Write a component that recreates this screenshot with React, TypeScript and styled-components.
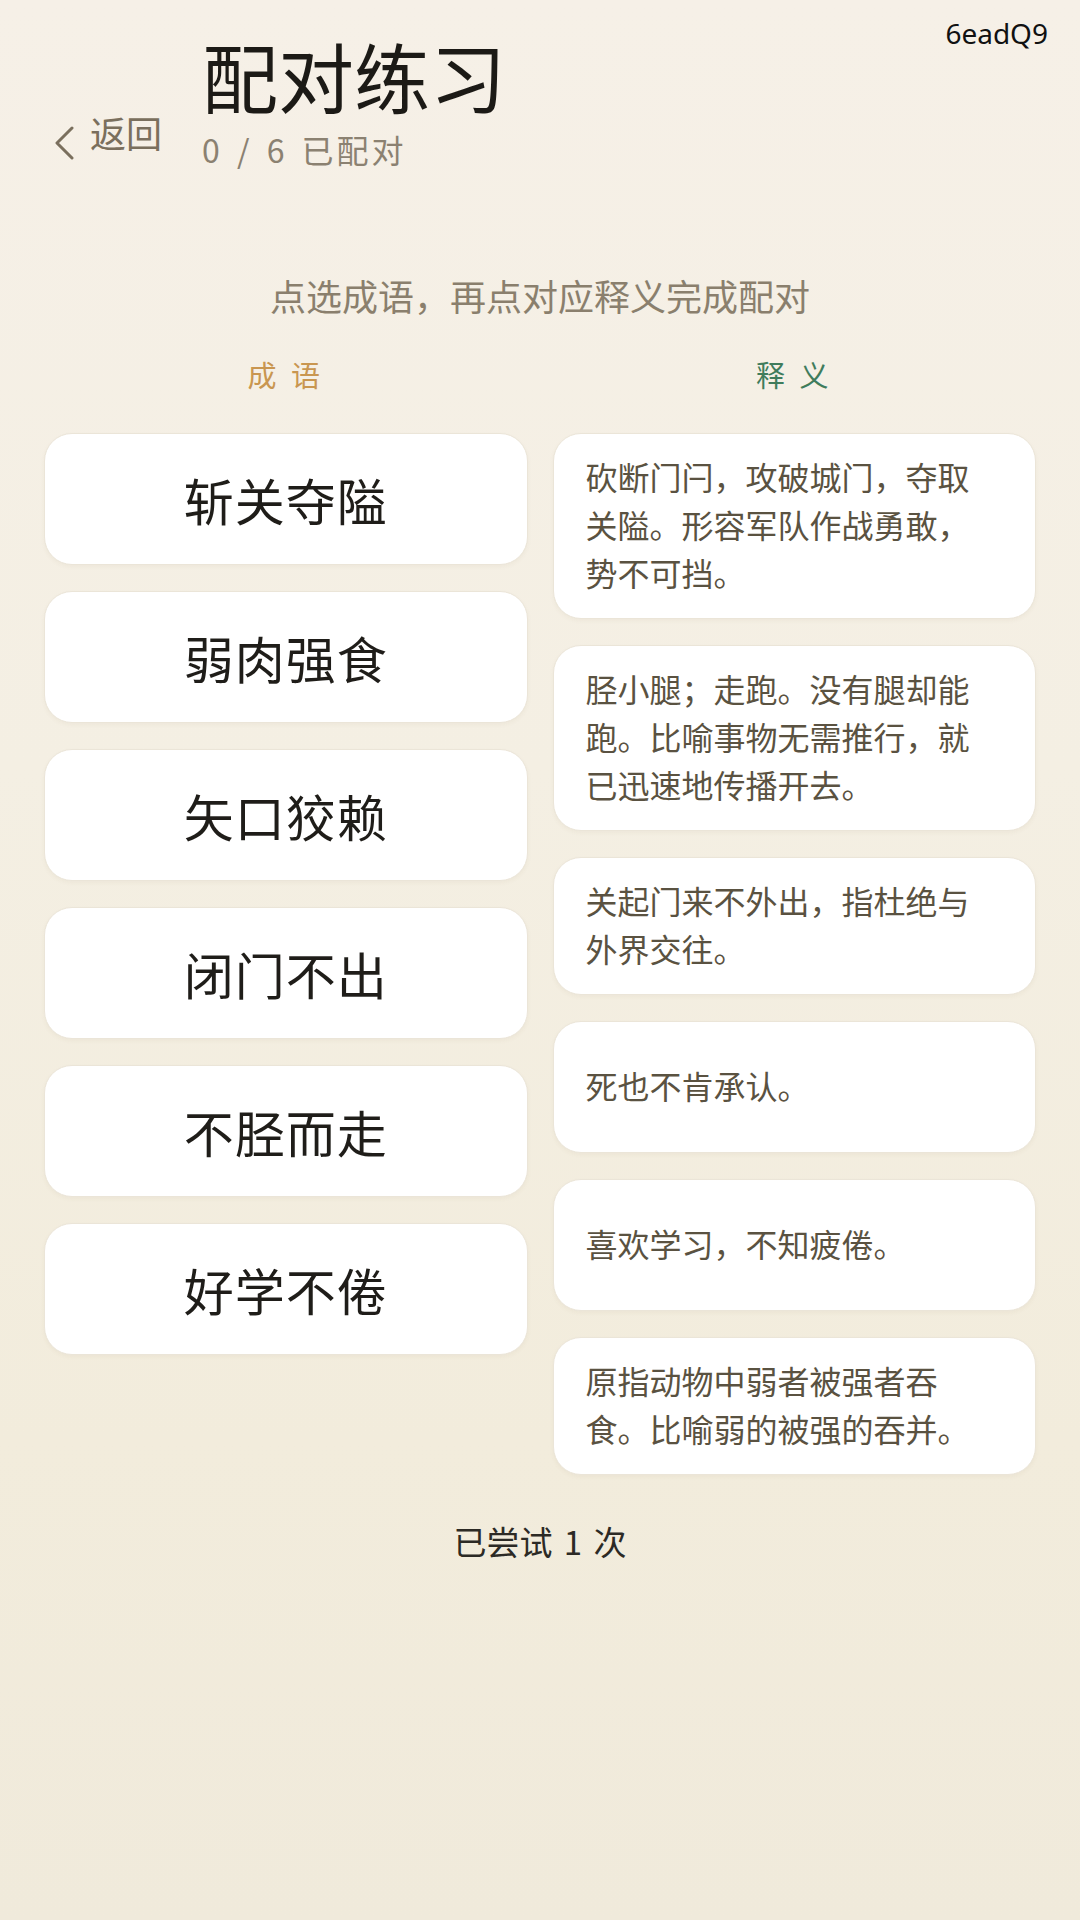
import styled, {createGlobalStyle} from 'styled-components';

const GlobalStyle = createGlobalStyle`
  html, body {
    margin: 0;
    padding: 0;
  }
  body {
    font-family: "Noto Sans CJK SC", "Noto Sans", sans-serif;
    background: #f3eee2;
  }
`

const Page = styled.div`
  position: relative;
  min-height: 1920px;
  box-sizing: border-box;
  padding: 33px 44px 0 44px;
  background: linear-gradient(180deg, #f6f0e7 0%, #f4efe3 40%, #f2ecdc 75%, #f0eadb 100%);
`

const Stamp = styled.div`
  position: absolute;
  top: 14px;
  right: 32px;
  font-family: "Noto Sans", sans-serif;
  font-size: 28px;
  color: #111;
`

const Header = styled.div`
  display: flex;
  align-items: flex-end;
`

const Back = styled.div`
  display: flex;
  align-items: flex-start;
  gap: 16px;
  width: 148px;
  margin-left: 10px;
  margin-bottom: 9px;
  color: #7a6f5d;
  font-size: 36px;
  line-height: 40px;

  svg {
    margin-top: 14px;
  }
`

const TitleBlock = styled.div`
  display: flex;
  flex-direction: column;
`

const Title = styled.h1`
  margin: 0;
  font-size: 76px;
  line-height: 84px;
  font-weight: 400;
  color: #1c1a16;
`

const Progress = styled.div`
  margin-top: 12px;
  font-size: 32px;
  line-height: 40px;
  color: #8b8171;
  letter-spacing: 3px;
  word-spacing: 4px;
`

const Hint = styled.div`
  margin-top: 104px;
  text-align: center;
  font-size: 36px;
  line-height: 44px;
  color: #8a7f6d;
`

const Columns = styled.div`
  display: grid;
  grid-template-columns: 1fr 1fr;
  column-gap: 25px;
  margin-top: 39px;
`

const Column = styled.div`
  display: flex;
  flex-direction: column;
  gap: 26px;
`

const ColumnLabel = styled.div<{color: string}>`
  text-align: center;
  font-size: 29px;
  line-height: 36px;
  letter-spacing: 4px;
  color: ${p => p.color};
  margin-bottom: 15px;
`

const Card = styled.div`
  box-sizing: border-box;
  min-height: 132px;
  background: #ffffff;
  border: 1.5px solid #ebe5d8;
  border-radius: 28px;
  box-shadow: 0 2px 4px rgba(120, 100, 60, 0.05);
  display: flex;
  align-items: center;
`

const IdiomCard = styled(Card)`
  justify-content: center;
  font-size: 50px;
  color: #1f1d19;
  letter-spacing: 1px;
`

const MeaningCard = styled(Card)`
  padding: 18px 40px 22px 32px;
  font-size: 32px;
  line-height: 48px;
  color: #5a5241;
`

const Attempts = styled.div`
  margin-top: 46px;
  text-align: center;
  font-size: 33px;
  line-height: 40px;
  color: #2c2a25;
  word-spacing: 4px;
`

const idioms = ['斩关夺隘', '弱肉强食', '矢口狡赖', '闭门不出', '不胫而走', '好学不倦'];

const meanings = [
    '砍断门闩，攻破城门，夺取关隘。形容军队作战勇敢，势不可挡。',
    '胫小腿；走跑。没有腿却能跑。比喻事物无需推行，就已迅速地传播开去。',
    '关起门来不外出，指杜绝与外界交往。',
    '死也不肯承认。',
    '喜欢学习，不知疲倦。',
    '原指动物中弱者被强者吞食。比喻弱的被强的吞并。',
];

const App = () => {
    return (
        <Page>
            <GlobalStyle/>
            <Stamp>6eadQ9</Stamp>
            <Header>
                <Back>
                    <svg width="20" height="34" viewBox="0 0 20 34" fill="none">
                        <path d="M18 2 L3 17 L18 32" stroke="#7a6f5d" strokeWidth="3" strokeLinecap="round" strokeLinejoin="round"/>
                    </svg>
                    <span>返回</span>
                </Back>
                <TitleBlock>
                    <Title>配对练习</Title>
                    <Progress>0 / 6 已配对</Progress>
                </TitleBlock>
            </Header>

            <Hint>点选成语，再点对应释义完成配对</Hint>

            <Columns>
                <Column>
                    <ColumnLabel color="#c99650">成 语</ColumnLabel>
                    {idioms.map(i => <IdiomCard key={i}>{i}</IdiomCard>)}
                </Column>
                <Column>
                    <ColumnLabel color="#3f7c5c">释 义</ColumnLabel>
                    {meanings.map(m => <MeaningCard key={m}>{m}</MeaningCard>)}
                </Column>
            </Columns>

            <Attempts>已尝试 1 次</Attempts>
        </Page>
    )
}

export default App
